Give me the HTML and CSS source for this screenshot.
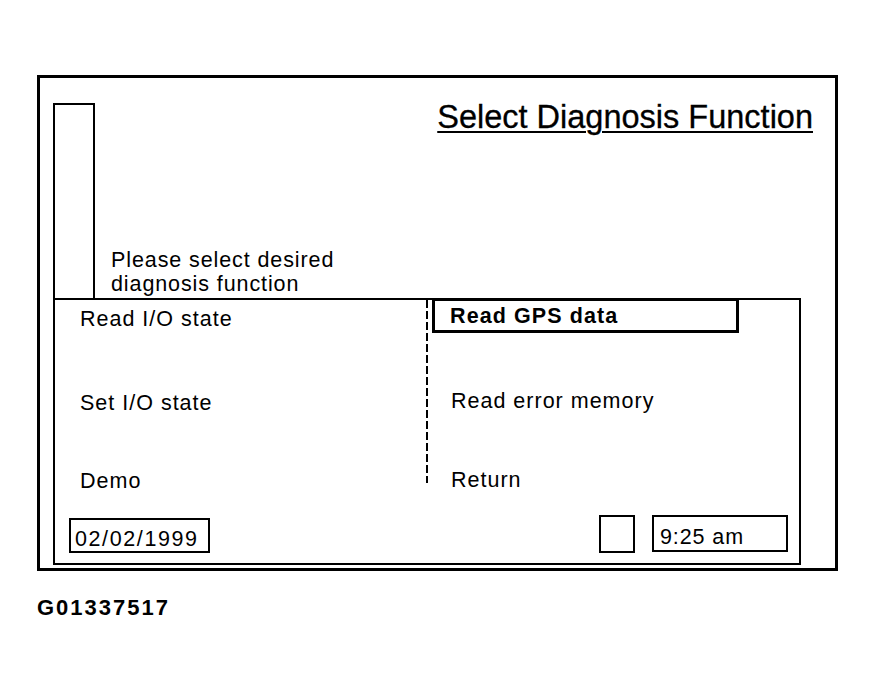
FILE: index.html
```html
<!DOCTYPE html>
<html>
<head>
<meta charset="utf-8">
<link rel="stylesheet" href="styles.css">
</head>
<body>
<div class="frame">
  <div class="header">
    <div class="tallbox"></div>
    <div class="headcol">
      <div class="title">Select Diagnosis Function</div>
      <div class="prompt">Please select desired<br>diagnosis function</div>
    </div>
  </div>
  <div class="panel">
    <div class="menu">
      <div class="col-left">
        <div class="item">Read I/O state</div>
        <div class="item">Set I/O state</div>
        <div class="item">Demo</div>
      </div>
      <div class="dash"></div>
      <div class="col-right">
        <div class="selected">Read GPS data</div>
        <div class="item item-r1">Read error memory</div>
        <div class="item item-r2">Return</div>
      </div>
    </div>
    <div class="status">
      <div class="datebox">02/02/1999</div>
      <div class="square"></div>
      <div class="timebox">9:25 am</div>
    </div>
  </div>
</div>
<div class="code">G01337517</div>
</body>
</html>
```
FILE: styles.css
```css
html, body {
  margin: 0;
  padding: 0;
  background: #fff;
  color: #000;
}
body {
  font-family: "Liberation Sans", Arial, sans-serif;
  padding: 75px 0 0 37px;
}
.frame {
  box-sizing: border-box;
  width: 801px;
  height: 496px;
  border: 3px solid #000;
  padding-left: 13px;
}
.header {
  display: flex;
  height: 220px;
}
.tallbox {
  box-sizing: border-box;
  width: 42px;
  height: 195px;
  align-self: flex-end;
  border: 2px solid #000;
  border-bottom: none;
  flex: none;
}
.headcol {
  flex: 1;
  display: flex;
  flex-direction: column;
  padding-left: 16px;
}
.title {
  font-size: 32.5px;
  line-height: 38px;
  margin-top: 20px;
  text-align: right;
  padding-right: 22px;
  text-decoration: underline;
  text-decoration-thickness: 2px;
  text-underline-offset: 3px;
  -webkit-text-stroke: 0.3px #000;
}
.prompt {
  margin-top: auto;
  padding-bottom: 2px;
  font-size: 21.5px;
  line-height: 24px;
  letter-spacing: 0.9px;
}
.panel {
  box-sizing: border-box;
  width: 748px;
  height: 267px;
  border: 2px solid #000;
  display: flex;
  flex-direction: column;
  font-size: 21.5px;
  line-height: 24px;
  letter-spacing: 1px;
}
.menu {
  display: flex;
}
.col-left {
  width: 371px;
  padding-top: 7px;
  padding-left: 25px;
  box-sizing: border-box;
  display: grid;
  grid-template-rows: 84px 78px 24px;
}
.dash {
  width: 2px;
  height: 183px;
  background: repeating-linear-gradient(to bottom, #000 0 8px, transparent 8px 11px);
  flex: none;
}
.col-right {
  margin-top: -2px;
  padding-left: 4px;
  display: flex;
  flex-direction: column;
}
.selected {
  box-sizing: border-box;
  width: 307px;
  height: 35px;
  border: 3px solid #000;
  padding: 2px 0 0 15px;
  line-height: 27px;
  font-weight: bold;
  letter-spacing: 1.1px;
}
.item-r1 {
  margin-top: 56px;
  padding-left: 19px;
}
.item-r2 {
  margin-top: 55px;
  padding-left: 19px;
}
.status {
  margin-top: auto;
  display: flex;
  align-items: flex-end;
  padding: 0 11px 10px 14px;
}
.datebox {
  box-sizing: border-box;
  width: 141px;
  height: 35px;
  border: 2px solid #000;
  padding: 7px 0 0 4px;
  letter-spacing: 1.6px;
  overflow: visible;
}
.square {
  box-sizing: border-box;
  width: 36px;
  height: 38px;
  border: 2px solid #000;
  margin-left: auto;
}
.timebox {
  box-sizing: border-box;
  width: 136px;
  height: 37px;
  border: 2px solid #000;
  margin-left: 17px;
  margin-bottom: 1px;
  padding: 8px 0 0 6px;
  letter-spacing: 0.9px;
}
.code {
  margin-top: 24px;
  font-size: 22px;
  line-height: 26px;
  font-weight: bold;
  letter-spacing: 2px;
}
```
